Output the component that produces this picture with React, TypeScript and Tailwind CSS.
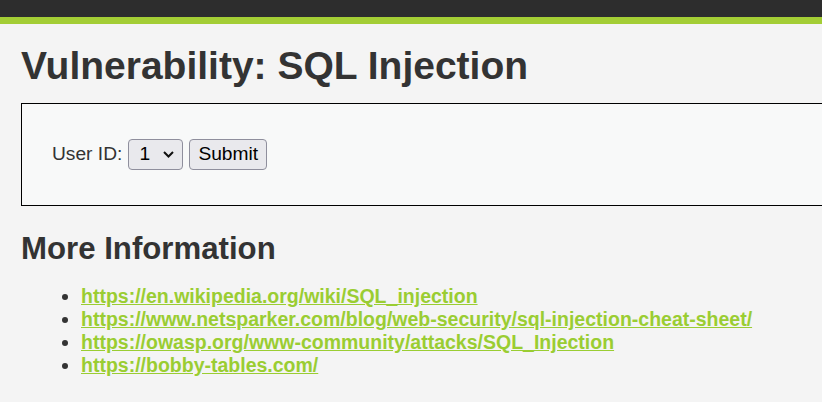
import React from 'react';

const links = [
  'https://en.wikipedia.org/wiki/SQL_injection',
  'https://www.netsparker.com/blog/web-security/sql-injection-cheat-sheet/',
  'https://owasp.org/www-community/attacks/SQL_Injection',
  'https://bobby-tables.com/',
];

export default function App() {
  return (
    <div className="w-[822px] h-[402px] overflow-hidden bg-[#f4f4f4] text-[#333] font-['Liberation_Sans',Arial,sans-serif]">
      <div className="h-[17px] bg-[#2d2d2d]" />
      <div className="h-[7px] bg-[#a3cd35]" />
      <div className="pl-[21px]">
        <h1 className="mt-[20px] text-[39px] font-bold leading-[44px]">Vulnerability: SQL Injection</h1>
        <div className="mt-[15px] w-[900px] h-[103px] border border-black bg-[#f8f9f9] flex items-center pl-[30px] text-[19.2px]">
          <span className="mr-[6px]">User ID:</span>
          <div className="flex items-center h-[31px] w-[55px] border border-[#8f8f9d] rounded-[4px] bg-[#e9e9ed] pl-[10px] gap-[12px] text-black">
            <span>1</span>
            <svg width="13" height="9" viewBox="0 0 13 9" fill="none" stroke="#111" strokeWidth="2">
              <path d="M2 2l4.5 4.5L11 2" />
            </svg>
          </div>
          <button className="ml-[6px] h-[31px] px-[8px] border border-[#8f8f9d] rounded-[4px] bg-[#e9e9ed] text-black">Submit</button>
        </div>
        <h2 className="mt-[25px] text-[31.2px] font-bold leading-[36px]">More Information</h2>
        <ul className="mt-[18px] list-disc pl-[60px] text-[19.5px] font-bold leading-[23px]">
          {links.map((l) => (
            <li key={l}>
              <a href={l} className="text-[#9acd32] underline">{l}</a>
            </li>
          ))}
        </ul>
      </div>
    </div>
  );
}
